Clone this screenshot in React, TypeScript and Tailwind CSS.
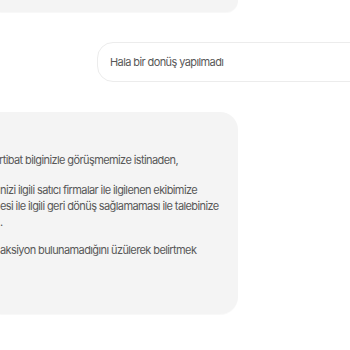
import React from "react";

export default function App() {
  return (
    <div
      className="w-[350px] h-[350px] overflow-hidden bg-white flex flex-col tracking-[-0.6px]"
      style={{ fontFamily: "Inter, 'Noto Sans', sans-serif" }}
    >
      <div className="h-[12px] w-[238px] shrink-0 rounded-br-[16px] bg-[#f4f4f4] shadow-[0_1px_1px_rgba(0,0,0,0.03)]" />

      <div className="mt-[30px] ml-[97px] h-[40px] w-[290px] shrink-0 flex items-center rounded-[16px] border border-[#ececec] bg-white pl-[12px] text-[11px] text-[#585858]">
        Hala bir donüş yapılmadı
      </div>

      <div className="mt-[30px] h-[202px] w-[238px] shrink-0 rounded-r-[18px] bg-[#f4f4f4] pt-[40px] text-[11px] leading-[16px] text-[#585858] whitespace-nowrap overflow-hidden shadow-[0_1px_1px_rgba(0,0,0,0.03)]">
        <div className="-ml-[1px]">rtibat bilginizle görüşmemize istinaden,</div>
        <div className="mt-[14px]">
          <div>nizi ilgili satıcı firmalar ile ilgilenen ekibimize</div>
          <div>esi ile ilgili geri dönüş sağlamaması ile talebinize</div>
          <div>.</div>
        </div>
        <div className="mt-[12px]">aksiyon bulunamadığını üzülerek belirtmek</div>
      </div>
    </div>
  );
}
